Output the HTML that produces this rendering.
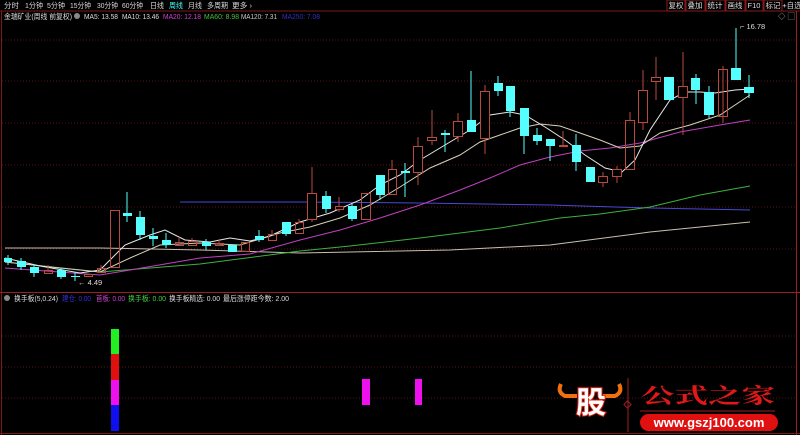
<!DOCTYPE html>
<html><head><meta charset="utf-8"><style>
body{margin:0;background:#000;width:800px;height:435px;overflow:hidden;font-family:"Liberation Sans","Noto Sans CJK SC",sans-serif;}
svg{position:absolute;left:0;top:0}
</style></head><body>
<svg width="800" height="435" viewBox="0 0 800 435" font-family="Liberation Sans, Noto Sans CJK SC, sans-serif">
<rect width="800" height="435" fill="#000"/>
<!-- menu -->
<g font-size="7.5" fill="#d8d8d8" lengthAdjust="spacingAndGlyphs">
<text x="4" y="8" textLength="15" lengthAdjust="spacingAndGlyphs">分时</text>
<text x="25" y="8" textLength="18" lengthAdjust="spacingAndGlyphs">1分钟</text>
<text x="47" y="8" textLength="18" lengthAdjust="spacingAndGlyphs">5分钟</text>
<text x="70" y="8" textLength="21" lengthAdjust="spacingAndGlyphs">15分钟</text>
<text x="97" y="8" textLength="21" lengthAdjust="spacingAndGlyphs">30分钟</text>
<text x="122" y="8" textLength="21" lengthAdjust="spacingAndGlyphs">60分钟</text>
<text x="150" y="8" textLength="14" lengthAdjust="spacingAndGlyphs">日线</text>
<text x="169" y="8" textLength="14" lengthAdjust="spacingAndGlyphs" fill="#4ff">周线</text>
<text x="188" y="8" textLength="14" lengthAdjust="spacingAndGlyphs">月线</text>
<text x="207" y="8" textLength="21" lengthAdjust="spacingAndGlyphs">多周期</text>
<text x="232" y="8" textLength="20" lengthAdjust="spacingAndGlyphs">更多 ›</text>
</g>
<line x1="0" y1="11" x2="800" y2="11" stroke="#7a1a1a"/>
<g font-size="7.5" text-anchor="middle">
<rect x="667" y="0" width="18" height="11" fill="none" stroke="#8a1a1a"/><text x="676" y="8" fill="#ddd">复权</text>
<rect x="686" y="0" width="19" height="11" fill="none" stroke="#8a1a1a"/><text x="695" y="8" fill="#ddd">叠加</text>
<rect x="706" y="0" width="19" height="11" fill="none" stroke="#8a1a1a"/><text x="715" y="8" fill="#ddd">统计</text>
<rect x="726" y="0" width="19" height="11" fill="none" stroke="#8a1a1a"/><text x="735" y="8" fill="#ddd">画线</text>
<rect x="746" y="0" width="17" height="11" fill="none" stroke="#8a1a1a"/><text x="754" y="8" fill="#ddd">F10</text>
<rect x="764" y="0" width="18" height="11" fill="none" stroke="#8a1a1a"/><text x="773" y="8" fill="#ddd">标记</text>
<text x="792" y="8" fill="#ddd">+自选</text>
</g>
<g font-size="7.5">
<text x="4" y="19" fill="#ddd" textLength="68" lengthAdjust="spacingAndGlyphs">金瑞矿业(周线 前复权)</text>
<circle cx="77" cy="16" r="3" fill="#888"/>
<text x="84" y="19" fill="#ddd" textLength="34" lengthAdjust="spacingAndGlyphs">MA5: 13.58</text>
<text x="122" y="19" fill="#ddd" textLength="37" lengthAdjust="spacingAndGlyphs">MA10: 13.46</text>
<text x="163" y="19" fill="#d040d0" textLength="38" lengthAdjust="spacingAndGlyphs">MA20: 12.18</text>
<text x="204" y="19" fill="#40c040" textLength="35" lengthAdjust="spacingAndGlyphs">MA60: 8.98</text>
<text x="241" y="19" fill="#ccc" textLength="36" lengthAdjust="spacingAndGlyphs">MA120: 7.31</text>
<text x="282" y="19" fill="#3030c0" textLength="38" lengthAdjust="spacingAndGlyphs">MA250: 7.08</text>
<text x="778" y="19" fill="#aaa">◇ ▢</text>
</g>
<!-- axes/grid -->
<line x1="1.5" y1="11" x2="1.5" y2="435" stroke="#7a1a1a"/>
<line x1="796.5" y1="11" x2="796.5" y2="435" stroke="#9a2020"/>
<g stroke="#5a1515" stroke-dasharray="1,2">
<line x1="2" y1="40" x2="796" y2="40"/><line x1="2" y1="81" x2="796" y2="81"/><line x1="2" y1="123" x2="796" y2="123"/><line x1="2" y1="165" x2="796" y2="165"/><line x1="2" y1="207" x2="796" y2="207"/><line x1="2" y1="249" x2="796" y2="249"/>
<line x1="2" y1="336" x2="796" y2="336"/><line x1="2" y1="367" x2="796" y2="367"/><line x1="2" y1="398" x2="796" y2="398"/>
</g>
<line x1="0" y1="292.5" x2="800" y2="292.5" stroke="#9a2020"/>
<line x1="0" y1="433.5" x2="800" y2="433.5" stroke="#7a1a1a"/>
<!-- MAs -->
<g fill="none" stroke-width="1">
<polyline stroke="#4848d8" points="180,202 300,202 420,203 550,205 650,208 750,210"/>
<polyline stroke="#c8c0b0" points="5,248 100,248 200,250 300,253 350,252 450,250 550,245 650,232 700,227 750,222"/>
<polyline stroke="#40b040" points="5,262 100,272 200,264 300,251 350,246 420,238 500,228 560,218 600,214 650,207 700,195 750,186"/>
<polyline stroke="#c040c0" points="5,268 100,275 130,270 200,258 250,254 300,240 340,230 380,218 420,205 460,190 490,178 520,165 550,157 580,151 610,148 640,143 680,132 720,125 750,120"/>
<polyline stroke="#d8d0b8" points="5,262 60,268 100,272 130,258 160,245 200,243 240,245 280,233 310,227 340,218 370,205 400,187 430,168 460,155 480,142 500,135 520,128 540,124 560,126 580,133 600,140 620,148 640,146 660,133 690,125 720,115 750,95"/>
<polyline stroke="#e8e8e8" points="5,258 40,266 80,273 100,270 125,245 150,235 165,230 185,240 210,242 230,238 250,241 270,236 300,222 330,213 360,200 380,185 400,175 420,160 445,145 470,130 490,115 510,112 525,115 545,127 565,140 585,155 605,168 622,172 635,160 650,130 670,100 685,92 700,92 715,93 735,90 750,89"/>
</g>
<!-- candles -->
<g stroke-width="1">
<line x1="8" y1="255" x2="8" y2="265" stroke="#5ff"/><rect x="4" y="258" width="8" height="4" fill="#5ff"/>
<line x1="21" y1="258" x2="21" y2="270" stroke="#5ff"/><rect x="17" y="261" width="9" height="6" fill="#5ff"/>
<line x1="34" y1="264" x2="34" y2="277" stroke="#5ff"/><rect x="30" y="267" width="9" height="6" fill="#5ff"/>
<line x1="48" y1="265" x2="48" y2="270" stroke="#b84a40"/><rect x="44.5" y="270.5" width="8" height="3" fill="none" stroke="#b84a40"/>
<line x1="61" y1="268" x2="61" y2="279" stroke="#5ff"/><rect x="57" y="270" width="9" height="7" fill="#5ff"/>
<line x1="75" y1="272" x2="75" y2="281" stroke="#5ff"/><rect x="71" y="276" width="9" height="1" fill="#5ff"/>
<rect x="84.5" y="274.5" width="8" height="2" fill="none" stroke="#b84a40"/>
<line x1="101" y1="265" x2="101" y2="268" stroke="#b84a40"/><rect x="97.5" y="268.5" width="8" height="4" fill="none" stroke="#b84a40"/>
<rect x="110.5" y="210.5" width="9" height="57" fill="none" stroke="#b84a40"/>
<line x1="127" y1="192" x2="127" y2="222" stroke="#5ff"/><rect x="123" y="213" width="9" height="3" fill="#5ff"/>
<line x1="140" y1="211" x2="140" y2="240" stroke="#5ff"/><rect x="136" y="217" width="9" height="18" fill="#5ff"/>
<line x1="153" y1="228" x2="153" y2="246" stroke="#5ff"/><rect x="149" y="236" width="9" height="3" fill="#5ff"/>
<line x1="166" y1="233" x2="166" y2="248" stroke="#5ff"/><rect x="162" y="240" width="9" height="5" fill="#5ff"/>
<line x1="179" y1="237" x2="179" y2="242" stroke="#b84a40"/><rect x="175.5" y="242.5" width="8" height="3" fill="none" stroke="#b84a40"/>
<line x1="192" y1="238" x2="192" y2="241" stroke="#b84a40"/><rect x="188.5" y="241.5" width="8" height="4" fill="none" stroke="#b84a40"/>
<line x1="206" y1="239" x2="206" y2="250" stroke="#5ff"/><rect x="202" y="242" width="9" height="4" fill="#5ff"/>
<line x1="219" y1="239" x2="219" y2="243" stroke="#b84a40"/><rect x="215.5" y="243.5" width="8" height="2" fill="none" stroke="#b84a40"/>
<rect x="228" y="245" width="9" height="7" fill="#5ff"/>
<rect x="241.5" y="242.5" width="8" height="9" fill="none" stroke="#b84a40"/>
<line x1="259" y1="230" x2="259" y2="242" stroke="#5ff"/><rect x="255" y="236" width="9" height="4" fill="#5ff"/>
<line x1="272" y1="230" x2="272" y2="234" stroke="#b84a40"/><rect x="268.5" y="234.5" width="8" height="6" fill="none" stroke="#b84a40"/>
<line x1="286" y1="222" x2="286" y2="236" stroke="#5ff"/><rect x="282" y="222" width="9" height="12" fill="#5ff"/>
<line x1="299" y1="219" x2="299" y2="222" stroke="#b84a40"/><rect x="295.5" y="222.5" width="8" height="11" fill="none" stroke="#b84a40"/>
<line x1="312" y1="167" x2="312" y2="222" stroke="#b84a40"/><rect x="307.5" y="193.5" width="9" height="26" fill="#000" stroke="#b84a40"/>
<line x1="326" y1="191" x2="326" y2="213" stroke="#5ff"/><rect x="322" y="196" width="9" height="13" fill="#5ff"/>
<line x1="339" y1="197" x2="339" y2="212" stroke="#b84a40"/><rect x="335.5" y="206.5" width="8" height="3" fill="#000" stroke="#b84a40"/>
<line x1="352" y1="204" x2="352" y2="221" stroke="#5ff"/><rect x="348" y="206" width="9" height="13" fill="#5ff"/>
<rect x="361.5" y="193.5" width="9" height="26" fill="none" stroke="#b84a40"/>
<line x1="380" y1="175" x2="380" y2="200" stroke="#5ff"/><rect x="376" y="175" width="9" height="20" fill="#5ff"/>
<line x1="392" y1="160" x2="392" y2="169" stroke="#b84a40"/><rect x="388.5" y="169.5" width="8" height="25" fill="none" stroke="#b84a40"/>
<line x1="405" y1="163" x2="405" y2="197" stroke="#5ff"/><rect x="401" y="171" width="9" height="2" fill="#5ff"/>
<line x1="418" y1="137" x2="418" y2="185" stroke="#b84a40"/><rect x="413.5" y="146.5" width="9" height="26" fill="#000" stroke="#b84a40"/>
<line x1="432" y1="110" x2="432" y2="145" stroke="#b84a40"/><rect x="427.5" y="137.5" width="9" height="3" fill="#000" stroke="#b84a40"/>
<line x1="445" y1="130" x2="445" y2="152" stroke="#5ff"/><rect x="441" y="133" width="9" height="2" fill="#5ff"/>
<line x1="458" y1="113" x2="458" y2="142" stroke="#b84a40"/><rect x="453.5" y="121.5" width="9" height="15" fill="#000" stroke="#b84a40"/>
<line x1="471" y1="71" x2="471" y2="132" stroke="#5ff"/><rect x="467" y="120" width="9" height="12" fill="#5ff"/>
<line x1="485" y1="85" x2="485" y2="154" stroke="#b84a40"/><rect x="480.5" y="91.5" width="9" height="47" fill="#000" stroke="#b84a40"/>
<line x1="498" y1="76" x2="498" y2="96" stroke="#5ff"/><rect x="494" y="83" width="9" height="8" fill="#5ff"/>
<line x1="510" y1="86" x2="510" y2="117" stroke="#5ff"/><rect x="506" y="86" width="9" height="25" fill="#5ff"/>
<line x1="524" y1="108" x2="524" y2="154" stroke="#5ff"/><rect x="520" y="108" width="9" height="28" fill="#5ff"/>
<line x1="537" y1="128" x2="537" y2="145" stroke="#5ff"/><rect x="533" y="135" width="9" height="6" fill="#5ff"/>
<line x1="550" y1="139" x2="550" y2="161" stroke="#5ff"/><rect x="546" y="139" width="9" height="7" fill="#5ff"/>
<line x1="563" y1="131" x2="563" y2="147" stroke="#b84a40"/><rect x="559" y="145" width="9" height="2" fill="#b84a40"/>
<line x1="576" y1="134" x2="576" y2="171" stroke="#5ff"/><rect x="572" y="145" width="9" height="17" fill="#5ff"/>
<rect x="586" y="167" width="9" height="15" fill="#5ff"/>
<line x1="603" y1="172" x2="603" y2="187" stroke="#b84a40"/><rect x="598.5" y="176.5" width="9" height="6" fill="#000" stroke="#b84a40"/>
<line x1="617" y1="166" x2="617" y2="183" stroke="#b84a40"/><rect x="612.5" y="169.5" width="9" height="7" fill="#000" stroke="#b84a40"/>
<line x1="630" y1="112" x2="630" y2="120" stroke="#b84a40"/><rect x="625.5" y="120.5" width="9" height="49" fill="none" stroke="#b84a40"/>
<line x1="643" y1="70" x2="643" y2="130" stroke="#b84a40"/><rect x="638.5" y="90.5" width="9" height="32" fill="#000" stroke="#b84a40"/>
<line x1="656" y1="57" x2="656" y2="100" stroke="#b84a40"/><rect x="651.5" y="77.5" width="9" height="4" fill="#000" stroke="#b84a40"/>
<rect x="664" y="77" width="10" height="23" fill="#5ff"/>
<line x1="683" y1="52" x2="683" y2="135" stroke="#b84a40"/><rect x="678.5" y="86.5" width="9" height="11" fill="#000" stroke="#b84a40"/>
<line x1="696" y1="74" x2="696" y2="104" stroke="#5ff"/><rect x="691" y="78" width="9" height="12" fill="#5ff"/>
<line x1="709" y1="86" x2="709" y2="118" stroke="#5ff"/><rect x="704" y="92" width="10" height="23" fill="#5ff"/>
<line x1="723" y1="66" x2="723" y2="123" stroke="#b84a40"/><rect x="718.5" y="69.5" width="9" height="47" fill="none" stroke="#b84a40"/>
<line x1="736" y1="28" x2="736" y2="80" stroke="#5ff"/><rect x="731" y="68" width="10" height="12" fill="#5ff"/>
<line x1="749" y1="75" x2="749" y2="98" stroke="#5ff"/><rect x="744" y="87" width="10" height="6" fill="#5ff"/>
</g>
<text x="740" y="29" font-size="7.5" fill="#ddd">⌐ 16.78</text>
<text x="78" y="285" font-size="7.5" fill="#ddd">← 4.49</text>
<!-- indicator -->
<g font-size="7.5">
<circle cx="7" cy="298" r="3" fill="#888"/>
<text x="14" y="301" fill="#ddd" textLength="44" lengthAdjust="spacingAndGlyphs">换手板(5,0.24)</text>
<text x="62" y="301" fill="#3030e0" textLength="29" lengthAdjust="spacingAndGlyphs">建仓: 0.00</text>
<text x="96" y="301" fill="#d040d0" textLength="29" lengthAdjust="spacingAndGlyphs">首板: 0.00</text>
<text x="128" y="301" fill="#40d040" textLength="38" lengthAdjust="spacingAndGlyphs">换手板: 0.00</text>
<text x="169" y="301" fill="#ddd" textLength="51" lengthAdjust="spacingAndGlyphs">换手板精选: 0.00</text>
<text x="223" y="301" fill="#ddd" textLength="66" lengthAdjust="spacingAndGlyphs">最后涨停距今数: 2.00</text>
</g>
<rect x="111" y="329" width="8" height="25" fill="#22ee22"/>
<rect x="111" y="354" width="8" height="26" fill="#e01010"/>
<rect x="111" y="380" width="8" height="25" fill="#ee10ee"/>
<rect x="111" y="405" width="8" height="26" fill="#1010ee"/>
<rect x="362" y="379" width="8" height="26" fill="#ee10ee"/>
<rect x="415" y="379" width="7" height="26" fill="#ee10ee"/>
<!-- logo -->
<g>
<path d="M561 384 q-4 8 4 12 h12 M619 384 q4 8 -4 12 h-12" stroke="#f07010" stroke-width="4" fill="none"/>
<text x="591" y="413" font-size="30" font-weight="bold" fill="#fff" stroke="#e02010" stroke-width="2" text-anchor="middle" font-family="Noto Sans CJK SC, sans-serif" paint-order="stroke">股</text>
<line x1="628" y1="378" x2="628" y2="432" stroke="#a02020"/>
<rect x="625" y="402" width="5" height="5" fill="none" stroke="#a02020" transform="rotate(45 627.5 404.5)"/>
<text x="641" y="403" font-size="21" font-weight="bold" fill="#e01818" textLength="134" lengthAdjust="spacingAndGlyphs" font-family="Noto Serif CJK SC, serif">公式之家</text>
<line x1="640" y1="411" x2="775" y2="411" stroke="#a02020"/>
<rect x="640" y="414" width="138" height="17" rx="8.5" fill="#e01010"/>
<text x="709" y="427" font-size="13" font-weight="bold" fill="#fff" text-anchor="middle">www.gszj100.com</text>
</g>
</svg>
</body></html>
